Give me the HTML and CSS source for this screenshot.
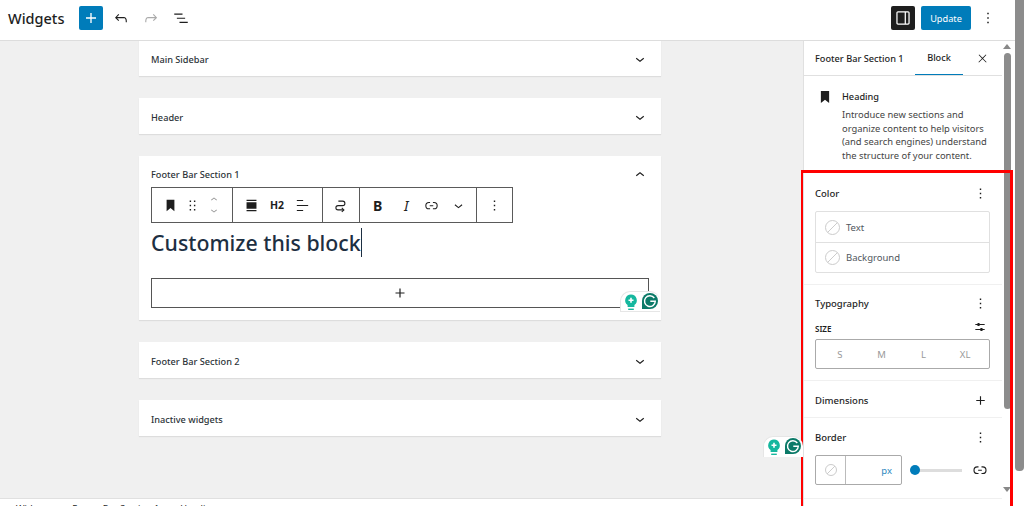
FILE: index.html
```html
<!DOCTYPE html>
<html lang="en">
<head>
  <meta charset="UTF-8" />
  <title>Widgets</title>
  <link rel="stylesheet" href="styles.css">
</head>
<body>

  <div class="app">
    <header class="topbar">
      <h1>Widgets</h1>
      <button class="btn-icon btn-add"><svg viewBox="0 0 24 24"><path d="M18 11.2h-5.2V6h-1.6v5.2H6v1.6h5.2V18h1.6v-5.2H18z"/></svg></button>
      <svg class="icon tool-undo" viewBox="0 0 24 24"><path d="M18.3 11.7c-.6-.6-1.4-.9-2.3-.9H6.7l2.9-3.3-1.1-1-4.5 5L8.5 16l1-1-2.7-2.7H16c.5 0 .9.2 1.3.5 1 1 1 3.4 1 4.5v.3h1.5v-.2c0-1.5 0-4.3-1.5-5.7z"/></svg>
      <svg class="icon tool-redo" viewBox="0 0 24 24"><path d="M15.6 6.5l-1.1 1 2.9 3.3H8c-.9 0-1.7.3-2.3.9-1.4 1.5-1.4 4.2-1.4 5.6v.2h1.5v-.3c0-1.1 0-3.5 1-4.5.3-.3.7-.5 1.3-.5h9.2L14.5 15l1.1 1.1 4.6-4.6-4.6-5z"/></svg>
      <svg class="icon tool-list" viewBox="0 0 24 24"><path d="M3 6h11v1.5H3V6zm3.5 5.5h11V13h-11v-1.5zM21 17H10v1.5h11V17z"/></svg>
      <div class="topbar-right">
        <button class="btn-icon btn-panel"><svg viewBox="0 0 24 24"><path d="M18 4H6c-1.1 0-2 .9-2 2v12c0 1.1.9 2 2 2h12c1.1 0 2-.9 2-2V6c0-1.1-.9-2-2-2zm-4 14.5H6c-.3 0-.5-.2-.5-.5V6c0-.3.2-.5.5-.5h8v13zm4.5-.5c0 .3-.2.5-.5.5h-2.5v-13H18c.3 0 .5.2.5.5v12z"/></svg></button>
        <button class="btn-update">Update</button>
        <svg class="icon tool-more" viewBox="0 0 24 24"><path d="M13 19h-2v-2h2v2zm0-6h-2v-2h2v2zm0-6h-2V5h2v2z"/></svg>
      </div>
    </header>

    <div class="workspace">
      <div class="editor">
        <main class="areas">
          <section class="area area-first">
            <div class="area-head"><span>Main Sidebar</span><svg class="icon" viewBox="0 0 24 24"><path d="M17.5 11.6L12 16l-5.5-4.4.9-1.2L12 14l4.5-3.6 1 1.2z"/></svg></div>
          </section>
          <section class="area">
            <div class="area-head"><span>Header</span><svg class="icon" viewBox="0 0 24 24"><path d="M17.5 11.6L12 16l-5.5-4.4.9-1.2L12 14l4.5-3.6 1 1.2z"/></svg></div>
          </section>
          <section class="area area-open">
            <div class="area-head"><span>Footer Bar Section 1</span><svg class="icon" viewBox="0 0 24 24"><path d="M6.5 12.4L12 8l5.5 4.4-.9 1.2L12 10l-4.5 3.6-1-1.2z"/></svg></div>
            <div class="area-body">
              <div class="block-toolbar">
                <div class="tb-group tb-a">
                  <svg class="icon" viewBox="0 0 24 24"><path d="M6.5 4v16l5.5-4.5 5.5 4.5V4z"/></svg>
                  <svg class="icon tb-drag" viewBox="0 0 24 24"><path d="M8 7h2V5H8v2zm0 6h2v-2H8v2zm0 6h2v-2H8v2zm6-14v2h2V5h-2zm0 8h2v-2h-2v2zm0 6h2v-2h-2v2z"/></svg>
                  <div class="tb-mover">
                    <svg viewBox="0 0 24 24"><path d="M6.5 14.4L12 10l5.5 4.4-.9 1.2L12 12l-4.5 3.6-1-1.2z"/></svg>
                    <svg viewBox="0 0 24 24"><path d="M17.5 9.6L12 14 6.5 9.6l.9-1.2L12 12l4.5-3.6 1 1.2z"/></svg>
                  </div>
                </div>
                <div class="tb-group tb-b">
                  <svg class="icon" viewBox="0 0 24 24"><path d="M5 5.5h14V4H5v1.5zM5 20h14v-1.5H5V20zM5 7.5h14v9H5z"/></svg>
                  <span class="tb-h2">H2</span>
                  <svg class="icon" viewBox="0 0 24 24"><path d="M4 19.8h8.9v-1.5H4v1.5zm8.9-15.6H4v1.5h8.9V4.2zm-8.9 7v1.5h16v-1.5H4z"/></svg>
                </div>
                <div class="tb-group tb-c">
                  <svg class="icon icon-loop" viewBox="0 0 24 24"><path d="M9 5.8h6a3.2 3.2 0 0 1 0 6.4H8.5a3 3 0 0 0 0 6H16"/><path d="M13.8 15.4l3 2.8-3 2.8"/></svg>
                </div>
                <div class="tb-group tb-d">
                  <span class="tb-bold">B</span>
                  <span class="tb-italic">I</span>
                  <svg class="icon" viewBox="0 0 24 24"><path d="M10 17.389H8.444A5.194 5.194 0 1 1 8.444 7H10v1.5H8.444a3.694 3.694 0 0 0 0 7.389H10v1.5ZM14 7h1.556a5.194 5.194 0 0 1 0 10.39H14v-1.5h1.556a3.694 3.694 0 0 0 0-7.39H14V7Zm-4.5 6h5v-1.5h-5V13Z"/></svg>
                  <svg class="icon" viewBox="0 0 24 24"><path d="M17.5 11.6L12 16l-5.5-4.4.9-1.2L12 14l4.5-3.6 1 1.2z"/></svg>
                </div>
                <div class="tb-group tb-e">
                  <svg class="icon" viewBox="0 0 24 24"><path d="M13 19h-2v-2h2v2zm0-6h-2v-2h2v2zm0-6h-2V5h2v2z"/></svg>
                </div>
              </div>
              <h2 class="block-heading"><span>Customize this block</span></h2>
              <div class="appender"><svg class="icon" viewBox="0 0 24 24"><path d="M18 11.2h-5.2V6h-1.6v5.2H6v1.6h5.2V18h1.6v-5.2H18z"/></svg></div>
            </div>
          </section>
          <section class="area">
            <div class="area-head"><span>Footer Bar Section 2</span><svg class="icon" viewBox="0 0 24 24"><path d="M17.5 11.6L12 16l-5.5-4.4.9-1.2L12 14l4.5-3.6 1 1.2z"/></svg></div>
          </section>
          <section class="area">
            <div class="area-head"><span>Inactive widgets</span><svg class="icon" viewBox="0 0 24 24"><path d="M17.5 11.6L12 16l-5.5-4.4.9-1.2L12 14l4.5-3.6 1 1.2z"/></svg></div>
          </section>
        </main>
        <footer class="crumbs">Widgets<span class="crumb-sep">▸</span>Footer Bar Section 1<span class="crumb-sep">▸</span>Heading</footer>
      </div>

      <aside class="sidebar">
        <div class="panel">
          <div class="tabs">
            <span class="tab-area">Footer Bar Section 1</span>
            <span class="tab-block">Block</span>
            <svg class="icon tab-close" viewBox="0 0 24 24"><path d="M13 11.8l6.1-6.3-1-1-6.1 6.2-6.1-6.2-1 1 6.1 6.3-6.5 6.7 1 1 6.5-6.6 6.5 6.6 1-1z"/></svg>
          </div>

          <div class="block-card">
            <svg class="icon" viewBox="0 0 24 24"><path d="M6.5 4v16l5.5-4.5 5.5 4.5V4z"/></svg>
            <div>
              <h3>Heading</h3>
              <p>Introduce new sections and organize content to help visitors (and search engines) understand the structure of your content.</p>
            </div>
          </div>

          <section class="tools tools-color">
            <div class="tools-head"><h4>Color</h4><svg class="icon" viewBox="0 0 24 24"><path d="M13 19h-2v-2h2v2zm0-6h-2v-2h2v2zm0-6h-2V5h2v2z"/></svg></div>
            <div class="color-list">
              <div class="color-item"><span class="swatch"></span>Text</div>
              <div class="color-item"><span class="swatch"></span>Background</div>
            </div>
          </section>

          <section class="tools tools-type">
            <div class="tools-head"><h4>Typography</h4><svg class="icon" viewBox="0 0 24 24"><path d="M13 19h-2v-2h2v2zm0-6h-2v-2h2v2zm0-6h-2V5h2v2z"/></svg></div>
            <div class="size-head"><span>SIZE</span><svg class="icon" viewBox="0 0 24 24"><path d="M14.5 13.8c-1.1 0-2.1.7-2.4 1.8H4V17h8.1c.3 1 1.3 1.8 2.4 1.8s2.1-.7 2.4-1.8H20v-1.5h-3.1c-.3-1-1.3-1.7-2.4-1.7zM11.9 7c-.3-1-1.3-1.8-2.4-1.8S7.4 6 7.1 7H4v1.5h3.1c.3 1 1.3 1.8 2.4 1.8s2.1-.7 2.4-1.8H20V7h-8.1z"/></svg></div>
            <div class="size-picker"><span>S</span><span>M</span><span>L</span><span>XL</span></div>
          </section>

          <section class="tools tools-dim">
            <div class="tools-head"><h4>Dimensions</h4><svg class="icon" viewBox="0 0 24 24"><path d="M18 11.2h-5.2V6h-1.6v5.2H6v1.6h5.2V18h1.6v-5.2H18z"/></svg></div>
          </section>

          <section class="tools tools-border">
            <div class="tools-head"><h4>Border</h4><svg class="icon" viewBox="0 0 24 24"><path d="M13 19h-2v-2h2v2zm0-6h-2v-2h2v2zm0-6h-2V5h2v2z"/></svg></div>
            <div class="border-row">
              <div class="border-input">
                <div class="border-swatch"><span class="swatch"></span></div>
                <div class="border-unit">px</div>
              </div>
              <div class="range"><span class="range-thumb"></span></div>
              <svg class="icon" viewBox="0 0 24 24"><path d="M10 17.389H8.444A5.194 5.194 0 1 1 8.444 7H10v1.5H8.444a3.694 3.694 0 0 0 0 7.389H10v1.5ZM14 7h1.556a5.194 5.194 0 0 1 0 10.39H14v-1.5h1.556a3.694 3.694 0 0 0 0-7.39H14V7Zm-4.5 6h5v-1.5h-5V13Z"/></svg>
            </div>
          </section>
          <section class="tools"></section>
        </div>

        <div class="panel-scroll">
          <span class="arrow-up"></span>
          <span class="panel-thumb"></span>
          <span class="arrow-down"></span>
        </div>
      </aside>
    </div>
  </div>

  <div class="page-scroll"><span class="page-thumb"></span></div>

  <!-- things that sit on top of the page -->
  <div class="highlight"></div>
  <div class="grammarly grammarly-a">
    <svg viewBox="0 0 40 22"><path d="M11 3.5a5.8 5.8 0 0 0-3.4 10.5v2h6.8v-2A5.8 5.8 0 0 0 11 3.5z" fill="#15b79e"/><path d="M8.2 17.6h5.6v1.4H8.2z" fill="#15b79e"/><path d="M11 6.7v5M8.5 9.2h5" stroke="#fff" stroke-width="1.6"/><path d="M30 2a8 8 0 1 1 0 16h-8v-8a8 8 0 0 1 8-8z" fill="#0b7a68"/><path d="M34.3 7a5.4 5.4 0 1 0 1 3.3h-5" fill="none" stroke="#fff" stroke-width="1.4"/></svg>
  </div>
  <div class="grammarly grammarly-b">
    <svg viewBox="0 0 40 22"><path d="M11 3.5a5.8 5.8 0 0 0-3.4 10.5v2h6.8v-2A5.8 5.8 0 0 0 11 3.5z" fill="#15b79e"/><path d="M8.2 17.6h5.6v1.4H8.2z" fill="#15b79e"/><path d="M11 6.7v5M8.5 9.2h5" stroke="#fff" stroke-width="1.6"/><path d="M30 2a8 8 0 1 1 0 16h-8v-8a8 8 0 0 1 8-8z" fill="#0b7a68"/><path d="M34.3 7a5.4 5.4 0 1 0 1 3.3h-5" fill="none" stroke="#fff" stroke-width="1.4"/></svg>
  </div>

</body>
</html>
```

FILE: styles.css
```css
* {
  margin: 0;
  padding: 0;
  box-sizing: border-box;
}

html, body {
  height: 506px;
  overflow: hidden;
}

body {
  display: flex;
  font-family: "Noto Sans", "Open Sans", sans-serif;
  font-size: 9.2px;
  color: #1e1e1e;
  background: #fff;
}

button {
  border: none;
  font-family: inherit;
}

.icon {
  width: 18px;
  height: 18px;
  fill: #1e1e1e;
  flex-shrink: 0;
}

.app {
  width: 1015px;
  height: 506px;
  display: flex;
  flex-direction: column;
}

/* top bar */
.topbar {
  height: 41px;
  display: flex;
  align-items: center;
  padding: 0 0 4px 8px;
  border-bottom: 1px solid #ddd;
  flex-shrink: 0;
}

.topbar h1 {
  width: 71px;
  font-size: 14.5px;
  font-weight: 500;
}

.btn-icon {
  width: 24px;
  height: 24px;
  border-radius: 2px;
  display: flex;
  align-items: center;
  justify-content: center;
}

.btn-icon svg {
  width: 20px;
  height: 20px;
  fill: #fff;
}

.btn-add {
  background: #007cba;
}

.tool-undo { margin-left: 9px; }
.tool-redo { margin-left: 12px; fill: #aaa; }
.tool-list { margin-left: 12px; }

.topbar-right {
  margin-left: auto;
  display: flex;
  align-items: center;
}

.btn-panel {
  background: #1e1e1e;
}

.btn-update {
  width: 50px;
  height: 24px;
  margin-left: 6px;
  border-radius: 2px;
  background: #007cba;
  color: #fff;
  font-size: 9.2px;
}

.tool-more {
  margin: 0 18px 0 8px;
}

/* editor */
.workspace {
  flex: 1;
  display: flex;
  min-height: 0;
}

.editor {
  width: 803px;
  display: flex;
  flex-direction: column;
  background: #f0f0f0;
}

.areas {
  height: 457px;
  padding-left: 139px;
  overflow: hidden;
  display: flex;
  flex-direction: column;
  gap: 22px;
}

.area {
  width: 522px;
  background: #fff;
  box-shadow: 0 1px 1px rgba(0, 0, 0, 0.08);
  flex-shrink: 0;
}

.area-first {
  margin-top: -1px;
}

.area-head {
  height: 36px;
  display: flex;
  align-items: center;
  justify-content: space-between;
  padding: 2px 12px 0;
  font-weight: 500;
  color: #2c3338;
}

.area-open {
  height: 164px;
}

.area-open .area-head {
  height: 31px;
  padding-top: 6px;
}

.area-body {
  padding: 0 12px;
}

.block-toolbar {
  width: 362px;
  height: 36px;
  display: flex;
  border: 1px solid #5a5a5a;
  background: #fff;
}

.tb-group {
  display: flex;
  align-items: center;
  height: 100%;
  border-right: 1px solid #5a5a5a;
}

.tb-group .icon {
  width: 17px;
  height: 17px;
}

.tb-a { width: 81px; padding-left: 10px; }
.tb-drag { margin-left: 5px; }
.tb-b { width: 90px; padding-left: 10px; }
.tb-c { width: 37px; padding-left: 9px; }
.tb-d { width: 117px; padding-left: 13px; }
.tb-e { border-right: none; padding-left: 9px; }

.tb-mover {
  display: flex;
  flex-direction: column;
  margin-left: 5px;
}

.tb-mover svg {
  width: 16px;
  height: 13px;
  fill: #949494;
}

.tb-h2 {
  width: 26px;
  margin-left: 4px;
  text-align: center;
  font-size: 10.5px;
  font-weight: 700;
}

.tb-b .icon:last-child {
  margin-left: 4px;
}

.icon-loop {
  fill: none;
  stroke: #1e1e1e;
  stroke-width: 1.5;
}

.tb-bold {
  width: 10px;
  margin-right: 21px;
  font-size: 14px;
  font-weight: 700;
}

.tb-italic {
  width: 6px;
  margin-right: 13px;
  font-size: 14px;
  font-style: italic;
}

.tb-d .icon:last-child {
  margin-left: 10px;
}

.block-heading {
  height: 55px;
  padding-top: 4px;
  font-size: 21.3px;
  line-height: 32px;
  font-weight: 500;
  color: #1d2f42;
}

.block-heading span {
  border-right: 1px solid #1d2f42;
}

.appender {
  width: 498px;
  height: 30px;
  border: 1px solid #555;
  display: flex;
  align-items: center;
  justify-content: center;
}

/* breadcrumb */
.crumbs {
  flex: 1;
  padding: 3px 0 0 16px;
  background: #fff;
  border-top: 1px solid #e0e0e0;
  line-height: 14px;
  color: #1e1e1e;
  overflow: hidden;
}

.crumb-sep {
  margin: 0 8px;
}

/* settings sidebar */
.sidebar {
  width: 212px;
  display: flex;
  overflow: hidden;
  border-left: 1px solid #e0e0e0;
  background: #fff;
}

.panel {
  width: 198px;
}

.tabs {
  height: 35px;
  display: flex;
  align-items: center;
  padding: 0 9px 0 11px;
  border-bottom: 1px solid #e0e0e0;
  font-weight: 500;
}

.tab-area {
  width: 100px;
}

.tab-block {
  width: 48px;
  height: 100%;
  margin-right: 13px;
  display: flex;
  align-items: center;
  justify-content: center;
  border-bottom: 1px solid #007cba;
}

.tab-close {
  width: 13px;
  height: 13px;
}

.block-card {
  height: 95px;
  display: flex;
  gap: 8px;
  padding: 12px 12px 0 12px;
}

.block-card h3 {
  font-size: 9.2px;
  font-weight: 500;
  line-height: 18px;
  margin-bottom: 2px;
}

.block-card p {
  font-size: 9.4px;
  line-height: 13.6px;
  color: #444;
}

.tools {
  padding: 0 12px 0 11px;
  border-top: 1px solid #f0f0f0;
}

.tools-head {
  display: flex;
  align-items: center;
  justify-content: space-between;
  height: 18px;
}

.tools-head h4 {
  font-size: 9.5px;
  font-weight: 500;
}

.tools-head .icon {
  width: 17px;
  height: 17px;
  margin-right: 1px;
}

.tools-color {
  height: 113px;
  padding-top: 12px;
}

.color-list {
  margin-top: 9px;
  border: 1px solid #e0e0e0;
  border-radius: 2px;
}

.color-item {
  height: 30px;
  display: flex;
  align-items: center;
  gap: 6px;
  padding-left: 9px;
  font-size: 9.5px;
  color: #50575e;
}

.color-item + .color-item {
  border-top: 1px solid #e0e0e0;
}

.swatch {
  width: 15px;
  height: 15px;
  border-radius: 50%;
  border: 1px solid #ccc;
  background: linear-gradient(135deg, transparent 47%, #ccc 47%, #ccc 53%, transparent 53%);
}

.tools-type {
  height: 96px;
  padding-top: 9px;
}

.size-head {
  display: flex;
  align-items: center;
  justify-content: space-between;
  height: 18px;
  margin-top: 7px;
  font-size: 8px;
  font-weight: 600;
}

.size-head .icon {
  width: 14px;
  height: 14px;
  margin: -3px 3px 0 0;
}

.size-picker {
  height: 30px;
  margin-top: 2px;
  padding: 0 3px;
  display: grid;
  grid-template-columns: repeat(4, 1fr);
  align-items: center;
  text-align: center;
  border: 1px solid #aaa;
  border-radius: 2px;
  font-size: 9.5px;
  color: #999;
}

.tools-dim {
  height: 37px;
  padding-top: 10px;
}

.tools-border {
  height: 81px;
  padding-top: 10px;
}

.border-row {
  display: flex;
  align-items: center;
  margin-top: 9px;
}

.border-input {
  width: 87px;
  height: 30px;
  display: flex;
  border: 1px solid #aaa;
  border-radius: 2px;
}

.border-swatch {
  width: 30px;
  display: flex;
  align-items: center;
  justify-content: center;
  border-right: 1px solid #bbb;
}

.border-swatch .swatch {
  width: 12px;
  height: 12px;
}

.border-unit {
  flex: 1;
  align-self: center;
  text-align: right;
  padding-right: 9px;
  font-size: 9.5px;
  color: #2d88c0;
}

.range {
  width: 52px;
  height: 3px;
  margin: 0 9px 0 8px;
  background: #ddd;
  position: relative;
}

.range-thumb {
  position: absolute;
  left: 0;
  top: -4px;
  width: 10px;
  height: 10px;
  border-radius: 50%;
  background: #007cba;
}

/* scrollbars */
.panel-scroll {
  width: 10px;
  display: flex;
  flex-direction: column;
  align-items: center;
  padding-top: 3px;
}

.arrow-up, .arrow-down {
  width: 0;
  height: 0;
  border-left: 4px solid transparent;
  border-right: 4px solid transparent;
}

.arrow-up {
  border-bottom: 5px solid #888;
}

.arrow-down {
  margin-top: 78px;
  border-top: 5px solid #888;
}

.panel-thumb {
  width: 7px;
  height: 356px;
  margin-top: 4px;
  border-radius: 4px;
  background: #8c8c8c;
}

.page-scroll {
  width: 9px;
  height: 506px;
  background: #fff;
}

.page-thumb {
  display: block;
  width: 9px;
  height: 471px;
  border-radius: 0 0 4px 4px;
  background: #8c8c8c;
}

/* overlays */
.highlight {
  position: absolute;
  left: 801px;
  top: 170px;
  width: 212px;
  height: 345px;
  border: 2px solid #f00;
  border-top-width: 3px;
  border-right-width: 3px;
}

.grammarly {
  position: absolute;
  width: 40px;
  height: 21px;
  background: #fff;
  border: 1px solid #e6e6e6;
  border-right: none;
  border-bottom: none;
  border-radius: 10px 10px 0 0;
}

.grammarly svg {
  display: block;
  width: 40px;
  height: 22px;
  margin: -1px 0 0 -1px;
}

.grammarly-a { left: 620px; top: 291px; border-bottom: 1px solid #e6e6e6; }
.grammarly-b { left: 763px; top: 436px; }
```
